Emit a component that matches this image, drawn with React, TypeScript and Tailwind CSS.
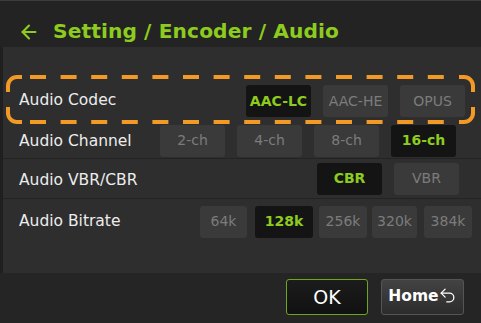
import { ArrowLeft, Undo2 } from "lucide-react"

type Opt = { t: string; cls: string; sel?: boolean }
type Row = { label: string; rowCls: string; labelCls: string; boxCls: string; opts: Opt[] }

const rows: Row[] = [
  {
    label: "Audio Codec",
    rowCls: "h-[40px]",
    labelCls: "",
    boxCls: "gap-[12px] pr-[16px]",
    opts: [
      { t: "AAC-LC", cls: "w-[65px]", sel: true },
      { t: "AAC-HE", cls: "w-[65px]" },
      { t: "OPUS", cls: "w-[65px]" },
    ],
  },
  {
    label: "Audio Channel",
    rowCls: "h-[38px] border-b border-[#232323]",
    labelCls: "pt-[4px]",
    boxCls: "gap-[12px] pr-[25px] pt-[2px]",
    opts: [
      { t: "2-ch", cls: "w-[65px]" },
      { t: "4-ch", cls: "w-[65px]" },
      { t: "8-ch", cls: "w-[65px]" },
      { t: "16-ch", cls: "w-[65px]", sel: true },
    ],
  },
  {
    label: "Audio VBR/CBR",
    rowCls: "h-[40px] border-b border-[#232323]",
    labelCls: "pt-[4px]",
    boxCls: "gap-[12px] pr-[22px]",
    opts: [
      { t: "CBR", cls: "w-[65px]", sel: true },
      { t: "VBR", cls: "w-[65px]" },
    ],
  },
  {
    label: "Audio Bitrate",
    rowCls: "h-[45px]",
    labelCls: "",
    boxCls: "pr-[9px]",
    opts: [
      { t: "64k", cls: "w-[47px]" },
      { t: "128k", cls: "w-[58px] ml-[8px]", sel: true },
      { t: "256k", cls: "w-[48px] ml-[6px]" },
      { t: "320k", cls: "w-[45px] ml-[5px]" },
      { t: "384k", cls: "w-[48px] ml-[7px]" },
    ],
  },
]

const ORANGE = "#f39a26"

export default function App() {
  return (
    <div className="w-[481px] h-[323px] bg-[#252525] flex flex-col font-['DejaVu_Sans',sans-serif] overflow-hidden">
      {/* Header */}
      <header className="h-[47px] shrink-0 bg-[#232323] border-t border-[#3c3c3c] flex items-center pl-[18px] pt-[15px]">
        <ArrowLeft size={22} strokeWidth={2.4} className="text-[#8dcb1f]" />
        <h1 className="ml-[13px] text-[20.2px] font-bold text-[#8dcb1f] leading-none tracking-[0.1px]">
          Setting / Encoder / Audio
        </h1>
      </header>

      {/* Content */}
      <main className="relative h-[226px] shrink-0 bg-[#2e2e2e] border-l-[3px] border-[#1f1f1f] pt-[34px]">
        {rows.map(row => (
          <div key={row.label} className={`flex items-center ${row.rowCls}`}>
            <span className={`pl-[16px] text-[15.5px] text-[#ececec] flex-1 ${row.labelCls}`}>{row.label}</span>
            <div className={`flex items-center ${row.boxCls}`}>
              {row.opts.map(o => (
                <div
                  key={o.t}
                  className={`h-[32px] rounded-[3px] flex items-center justify-center text-[14px] ${o.cls} ${
                    o.sel ? "bg-[#141414] text-[#8dcb1f] font-bold" : "bg-[#3a3a3a] text-[#7c7c7c]"
                  }`}
                >
                  {o.t}
                </div>
              ))}
            </div>
          </div>
        ))}

        {/* focus outline, drawn in page coordinates */}
        <svg
          className="absolute -left-[3px] top-0 pointer-events-none"
          width="481"
          height="226"
          viewBox="0 47 481 226"
          fill="none"
          stroke={ORANGE}
          strokeWidth="4"
        >
          <path d="M8 92 V86 A9 9 0 0 1 17 77 H22" />
          <path d="M459 77 H464 A9 9 0 0 1 473 86 V92" />
          <path d="M473 107 V113 A9 9 0 0 1 464 122 H459" />
          <path d="M22 122 H17 A9 9 0 0 1 8 113 V107" />
          <line x1="30" y1="77" x2="446" y2="77" strokeDasharray="16 14.6" />
          <line x1="30" y1="122" x2="446" y2="122" strokeDasharray="16 14.6" />
        </svg>
      </main>

      {/* Footer */}
      <footer className="flex-1 bg-[#252525] flex justify-end items-start pt-[6px] pr-[17px] gap-[13px]">
        <button className="w-[82px] h-[36px] rounded-[3px] border border-[#6ea61c] bg-gradient-to-b from-[#1c1c1c] to-[#111111] text-white text-[19px]">
          OK
        </button>
        <button className="w-[83px] h-[36px] rounded-[3px] border border-[#555555] bg-gradient-to-b from-[#434343] to-[#2c2c2c] text-white text-[15.5px] font-bold flex items-center justify-center">
          Home
          <Undo2 size={19} strokeWidth={1.6} className="-ml-[1px] -mt-[3px]" />
        </button>
      </footer>
    </div>
  )
}
